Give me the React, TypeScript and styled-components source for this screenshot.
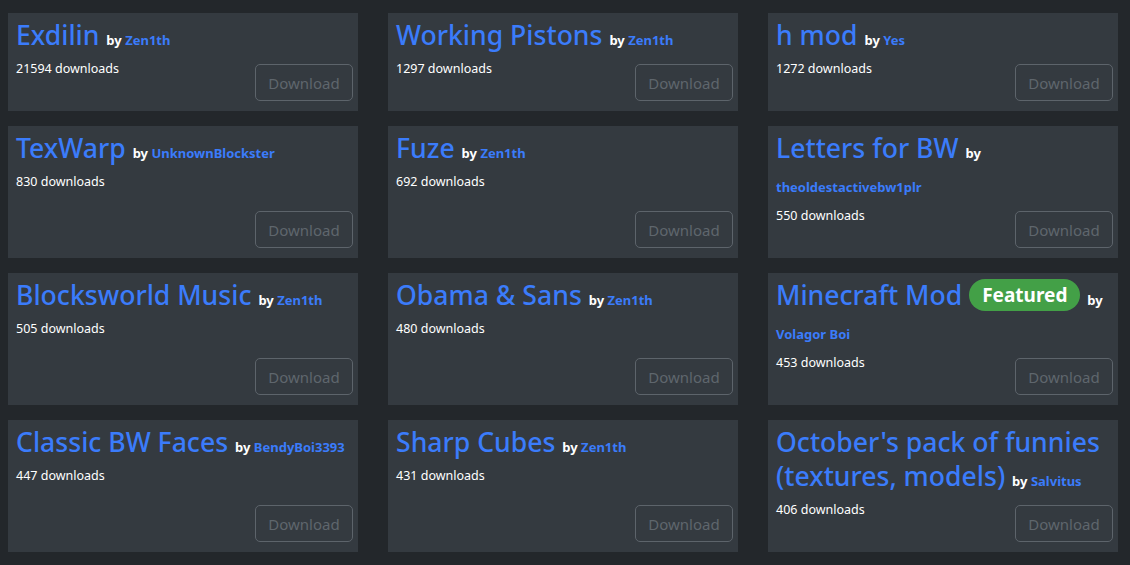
import React from "react";
import styled, { createGlobalStyle } from "styled-components";

interface Mod {
  name: string;
  author: string;
  downloads: number;
  featured?: boolean;
}

const mods: Mod[] = [
  { name: "Exdilin", author: "Zen1th", downloads: 21594 },
  { name: "Working Pistons", author: "Zen1th", downloads: 1297 },
  { name: "h mod", author: "Yes", downloads: 1272 },
  { name: "TexWarp", author: "UnknownBlockster", downloads: 830 },
  { name: "Fuze", author: "Zen1th", downloads: 692 },
  { name: "Letters for BW", author: "theoldestactivebw1plr", downloads: 550 },
  { name: "Blocksworld Music", author: "Zen1th", downloads: 505 },
  { name: "Obama & Sans", author: "Zen1th", downloads: 480 },
  { name: "Minecraft Mod", author: "Volagor Boi", downloads: 453, featured: true },
  { name: "Classic BW Faces", author: "BendyBoi3393", downloads: 447 },
  { name: "Sharp Cubes", author: "Zen1th", downloads: 431 },
  { name: "October's pack of funnies (textures, models)", author: "Salvitus", downloads: 406 },
];

export default function App() {
  return (
    <>
      <GlobalStyle />
      <ModGrid>
        {mods.map((mod) => (
          <Card key={mod.name}>
            <Title>
              {mod.name}{" "}
              {mod.featured && (
                <>
                  <Badge>Featured</Badge>{" "}
                </>
              )}
              <Byline>
                <By>by</By> <Author href="#">{mod.author}</Author>
              </Byline>
            </Title>
            <Footer>
              <Downloads>{mod.downloads} downloads</Downloads>
              <DownloadButton disabled>Download</DownloadButton>
            </Footer>
          </Card>
        ))}
      </ModGrid>
    </>
  );
}

const GlobalStyle = createGlobalStyle`
  html, body {
    margin: 0;
    background: #23272b;
    font-family: "Noto Sans", "Open Sans", sans-serif;
    color: #fff;
  }
`;

const ModGrid = styled.div`
  display: grid;
  grid-template-columns: repeat(3, 350px);
  column-gap: 30px;
  row-gap: 15px;
  padding: 13px 0 13px 8px;
`;

const Card = styled.div`
  background: #343a40;
  min-height: 98px;
  padding: 5px 5px 10px 8px;
  box-sizing: border-box;
  display: flex;
  flex-direction: column;
`;

const Title = styled.h2`
  margin: 0;
  font-size: 26.6px;
  font-weight: 500;
  line-height: 34px;
  color: #3b7cfb;
`;

const Byline = styled.span`
  font-size: 13px;
  font-weight: 700;
  line-height: 1;
`;

const By = styled.span`
  color: #fff;
`;

const Author = styled.a`
  color: #3b7cfb;
  text-decoration: none;
`;

const Badge = styled.span`
  display: inline-block;
  background: #43a047;
  color: #fff;
  font-size: 19px;
  font-weight: 700;
  line-height: 32px;
  padding: 0 13px;
  border-radius: 16px;
  vertical-align: 3px;
`;

const Footer = styled.div`
  display: flex;
  justify-content: space-between;
  align-items: flex-start;
  margin-top: 7px;
  flex: 1;
`;

const Downloads = styled.p`
  margin: 0;
  font-size: 12.5px;
  line-height: 20px;
`;

const DownloadButton = styled.button`
  align-self: flex-end;
  margin-top: 5px;
  width: 98px;
  height: 37px;
  background: transparent;
  border: 1px solid #5d646b;
  border-radius: 5px;
  color: #5f666d;
  font-family: inherit;
  font-size: 15px;
`;
